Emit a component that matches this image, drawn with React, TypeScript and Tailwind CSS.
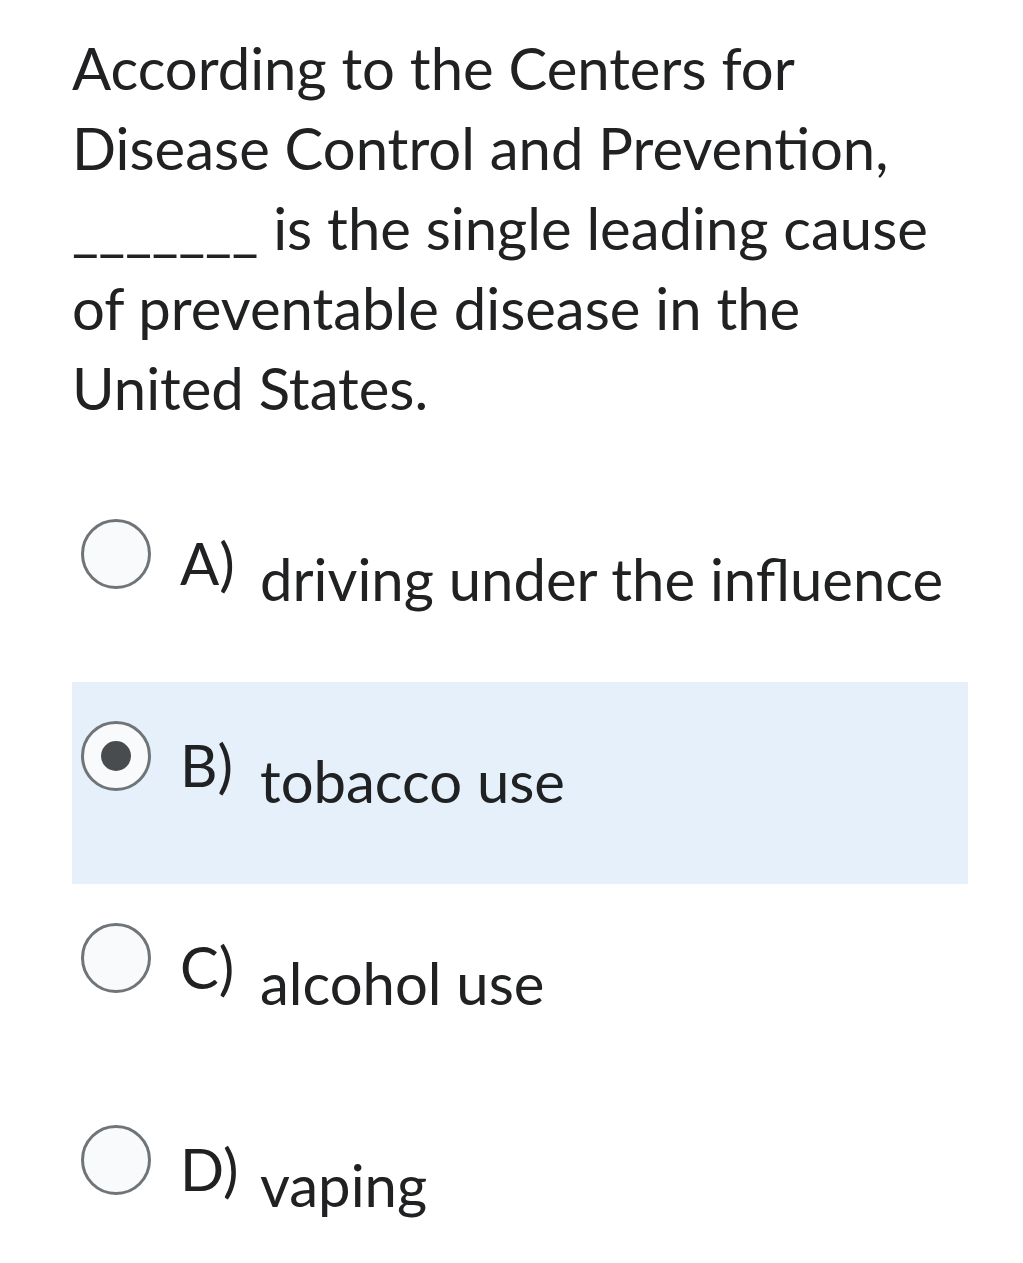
import { useState } from "react";

const options = [
  { key: "A", text: "driving under the influence" },
  { key: "B", text: "tobacco use" },
  { key: "C", text: "alcohol use" },
  { key: "D", text: "vaping" },
];

const App = () => {
  // B is the picked answer in the screenshot
  const [picked, setPicked] = useState("B");

  return (
    <main className="min-h-screen bg-white text-[#202122] font-['Lato',sans-serif]">
      <section className="pl-[72px] pr-[55px] pt-[28px]">
        <p className="text-[58px] leading-[80px]">
          <span className="block">According to the Centers for</span>
          <span className="block">Disease Control and Prevention,</span>
          <span className="block">_______ is the single leading cause</span>
          <span className="block">of preventable disease in the</span>
          <span className="block">United States.</span>
        </p>

        <div className="mt-[52px] flex flex-col">
          {options.map((o) => {
            const on = picked === o.key;
            return (
              <label
                key={o.key}
                onClick={() => setPicked(o.key)}
                className={
                  "flex items-start h-[202px] pt-[39px] cursor-pointer " +
                  (on ? "bg-[#e6f0fa]" : "")
                }
              >
                <span className="ml-[9px] w-[70px] h-[70px] shrink-0 rounded-full border-[3px] border-[#6f7478] bg-[#f9fafc] flex items-center justify-center">
                  {on && <span className="w-[30px] h-[30px] rounded-full bg-[#494c4f]" />}
                </span>
                <span className="ml-[29px] w-[80px] shrink-0 text-[58px] leading-[60px] mt-[14px]">{o.key})</span>
                <span className="text-[58px] leading-[60px] mt-[30px]">{o.text}</span>
              </label>
            );
          })}
        </div>
      </section>
    </main>
  );
};

export default App;
